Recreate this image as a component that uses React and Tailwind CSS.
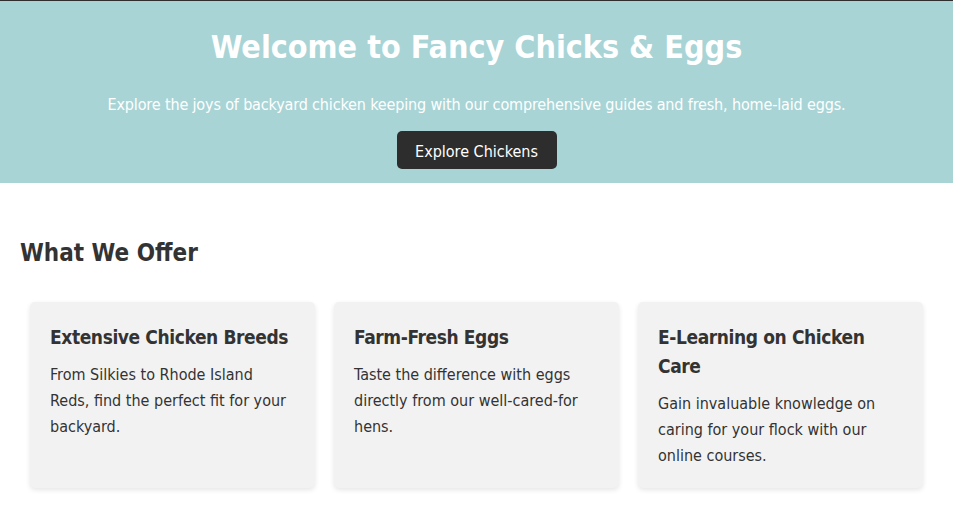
import React from "react";

const offers = [
  {
    title: "Extensive Chicken Breeds",
    text: "From Silkies to Rhode Island Reds, find the perfect fit for your backyard.",
  },
  {
    title: "Farm-Fresh Eggs",
    text: "Taste the difference with eggs directly from our well-cared-for hens.",
  },
  {
    title: "E-Learning on Chicken Care",
    text: "Gain invaluable knowledge on caring for your flock with our online courses.",
  },
];

function App() {
  return (
    <div
      className="min-h-[520px] bg-white text-[#333333]"
      style={{ fontFamily: '"DejaVu Sans Condensed", "DejaVu Sans", sans-serif' }}
    >
      {/* Hero */}
      <header className="border-t border-[#2f2f2f] bg-[#a8d4d6] px-5 pt-[27px] pb-[14px] text-center text-white">
        <h1 className="text-[32px] font-bold leading-[38px]">
          Welcome to Fancy Chicks &amp; Eggs
        </h1>
        <p className="mt-[27px] text-[16px] leading-6 tracking-[-0.15px]">
          Explore the joys of backyard chicken keeping with our comprehensive guides and fresh, home-laid eggs.
        </p>
        <button className="mt-[14px] h-[38px] w-[160px] rounded-[5px] bg-[#2d2d2d] pt-[3px] text-[16px] text-white">
          Explore Chickens
        </button>
      </header>

      {/* Offers */}
      <section className="px-5 pt-[55px]">
        <h2 className="text-[24px] font-bold leading-[30px]">What We Offer</h2>
        <div className="mt-[34px] grid grid-cols-3 gap-[19px] px-[10px]">
          {offers.map((o) => (
            <div
              key={o.title}
              className="rounded-[5px] bg-[#f2f2f2] px-5 pt-[21px] pb-[19px] shadow-[0_2px_5px_rgba(0,0,0,0.1)]"
            >
              <h3 className="text-[19px] font-bold leading-[29px] tracking-[-0.4px]">{o.title}</h3>
              <p className="mt-[10px] text-[16px] leading-[26px]">{o.text}</p>
            </div>
          ))}
        </div>
      </section>
    </div>
  );
}

export default App;
